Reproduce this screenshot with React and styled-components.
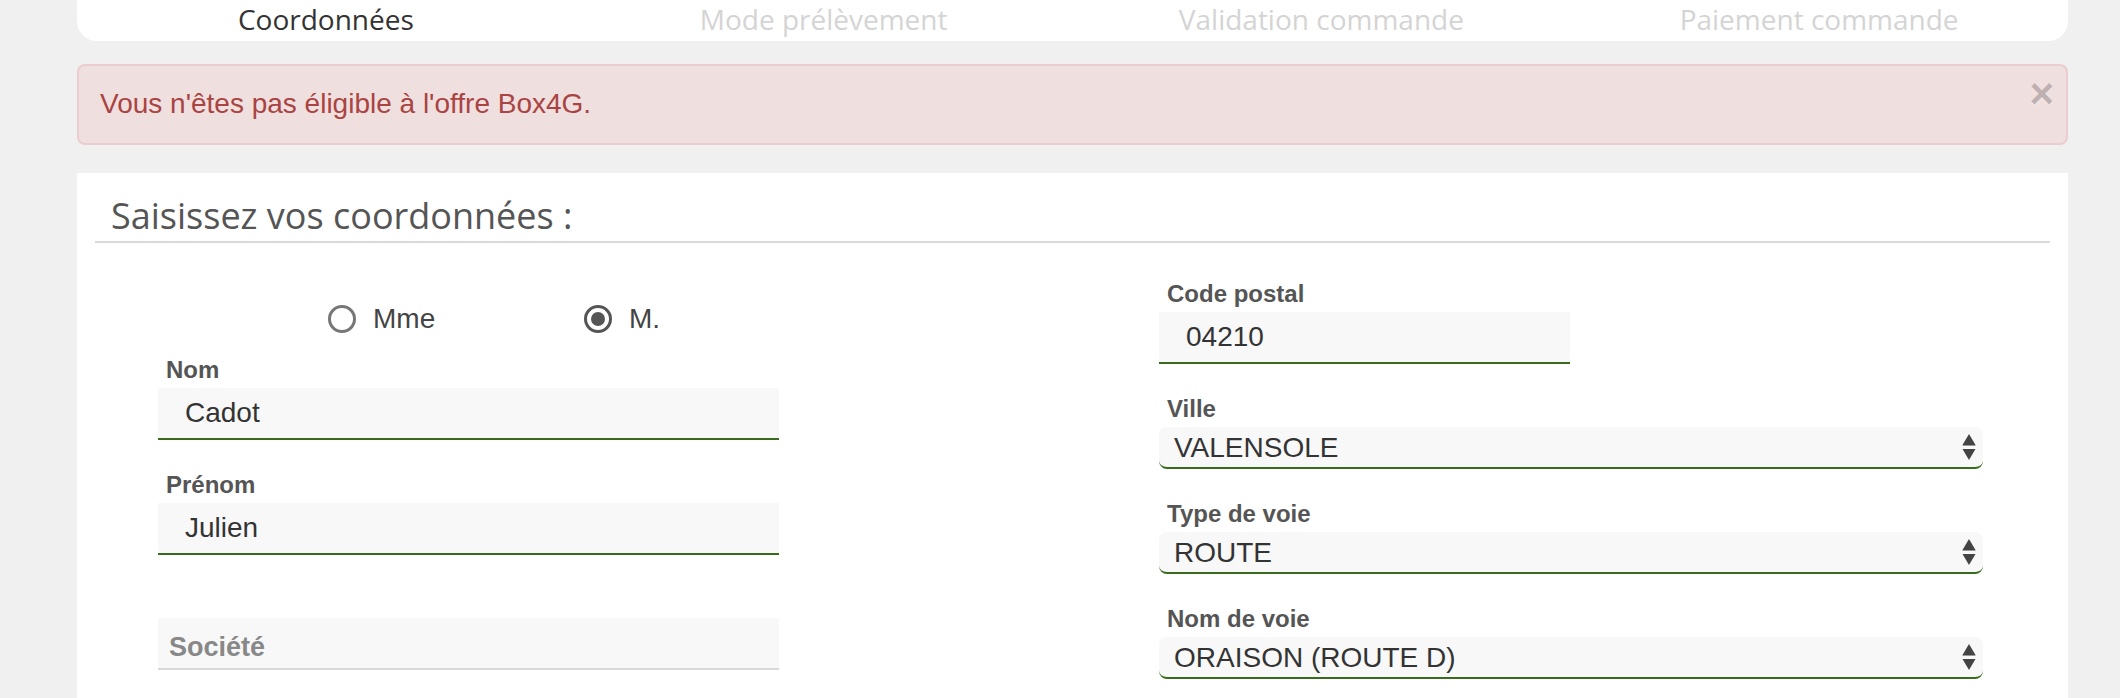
import React from "react";
import styled, { createGlobalStyle } from "styled-components";

const GREEN = "#386c1c";

const GlobalStyle = createGlobalStyle`
  html, body {
    margin: 0;
    padding: 0;
    background: #f0f0f0;
    overflow: hidden;
  }
  body {
    font-family: "Liberation Sans", Arial, sans-serif;
  }
  * { box-sizing: border-box; }
`;

const Page = styled.div`
  width: 1991px;
  margin-left: 77px;
`;

const TabBar = styled.nav`
  display: grid;
  grid-template-columns: repeat(4, 1fr);
  height: 41px;
  padding-top: 1px;
  background: #fff;
  border-radius: 0 0 20px 20px;
`;

const Tab = styled.div`
  font-family: "Open Sans", sans-serif;
  font-size: 28px;
  line-height: 36px;
  text-align: center;
  color: ${(p) => (p.$active ? "#333" : "#d4d4d4")};
`;

const Alert = styled.div`
  display: flex;
  align-items: flex-start;
  margin-top: 23px;
  padding: 18px 12px 19px 21px;
  background: #f0dfdf;
  border: 2px solid #ebccd1;
  border-radius: 8px;
  color: #a94442;
  font-size: 28px;
  line-height: 40px;
`;

const AlertText = styled.div`
  flex: 1;
`;

const CloseButton = styled.button`
  margin-top: -11px;
  padding: 0;
  border: 0;
  background: transparent;
  font-family: "Liberation Sans", Arial, sans-serif;
  font-size: 42px;
  font-weight: 700;
  line-height: 42px;
  color: #000;
  opacity: 0.2;
  text-shadow: 0 2px 0 #fff;
  cursor: pointer;
`;

const Card = styled.section`
  margin-top: 28px;
  height: 525px;
  padding: 21px 18px 0;
  background: #fff;
`;

const Heading = styled.h2`
  margin: 0;
  padding: 0 0 3px 16px;
  border-bottom: 2px solid #d9d9d9;
  font-family: "Open Sans", sans-serif;
  font-size: 36px;
  font-weight: 400;
  line-height: 44px;
  color: #555;
`;

const FormGrid = styled.div`
  display: grid;
  grid-template-columns: 1064px 1fr;
`;

const Column = styled.div`
  display: flex;
  flex-direction: column;
  align-items: flex-start;
  padding-left: ${(p) => p.$padLeft || 0}px;
  padding-top: ${(p) => p.$padTop || 0}px;
`;

const RadioRow = styled.div`
  display: flex;
  align-items: center;
  height: 40px;
  margin-top: 56px;
  margin-bottom: 16px;
  padding-left: 170px;
`;

const RadioOption = styled.label`
  display: flex;
  align-items: center;
  gap: 17px;
  width: ${(p) => p.$width || "auto"};
  font-size: 28px;
  color: #444;
`;

const Radio = styled.input.attrs({ type: "radio" })`
  appearance: none;
  margin: 0;
  width: 28px;
  height: 28px;
  border-radius: 50%;
  border: 3px solid #777;
  background: #fff;
  display: grid;
  place-items: center;
  &:checked {
    border-color: #555;
  }
  &:checked::after {
    content: "";
    width: 14px;
    height: 14px;
    border-radius: 50%;
    background: #555;
  }
`;

const Field = styled.div`
  display: flex;
  flex-direction: column;
  margin-bottom: 30px;
`;

const Label = styled.label`
  display: block;
  min-height: 28px;
  margin-top: 1px;
  margin-bottom: 4px;
  padding-left: 8px;
  font-size: 24px;
  font-weight: 700;
  line-height: 28px;
  color: #555;
`;

const TextInput = styled.input`
  width: ${(p) => p.$width}px;
  height: 52px;
  padding: ${(p) => (p.$placeholderStyle ? "8px 11px 0" : "0 27px")};
  border: 0;
  border-bottom: 2px solid ${(p) => (p.$muted ? "#d9d9d9" : GREEN)};
  background: #f8f8f8;
  font-family: "Liberation Sans", Arial, sans-serif;
  font-size: 28px;
  color: #333;
  outline: none;
  &::placeholder {
    color: #888;
    font-weight: 700;
    font-size: 27px;
    opacity: 1;
  }
`;

const SelectWrap = styled.div`
  position: relative;
  width: 824px;
`;

const Select = styled.select`
  appearance: none;
  width: 100%;
  height: 42px;
  padding: 0 40px 0 15px;
  border: 0;
  border-bottom: 2px solid ${GREEN};
  border-radius: 8px;
  background: #f8f8f8;
  font-family: "Liberation Sans", Arial, sans-serif;
  font-size: 28px;
  color: #333;
  outline: none;
`;

const SelectArrows = styled.svg`
  position: absolute;
  right: 7px;
  top: 7px;
  pointer-events: none;
`;

function Arrows() {
  return (
    <SelectArrows width="14" height="27" viewBox="0 0 14 27">
      <path d="M7 0 L13.5 11 L0.5 11 Z" fill="#444" />
      <rect x="0.5" y="11" width="13" height="1" fill="#999" />
      <path d="M0.5 15 L13.5 15 L7 26 Z" fill="#444" />
    </SelectArrows>
  );
}

function SelectField({ label, value }) {
  return (
    <Field>
      <Label>{label}</Label>
      <SelectWrap>
        <Select defaultValue={value}>
          <option value={value}>{value}</option>
        </Select>
        <Arrows />
      </SelectWrap>
    </Field>
  );
}

function InputField({ label, value, width, placeholder, muted }) {
  return (
    <Field>
      <Label>{label}</Label>
      <TextInput
        $width={width}
        $muted={muted}
        $placeholderStyle={!!placeholder}
        defaultValue={value}
        placeholder={placeholder}
      />
    </Field>
  );
}

export default function App() {
  return (
    <>
      <GlobalStyle />
      <Page>
        <TabBar>
          <Tab $active>Coordonnées</Tab>
          <Tab>Mode prélèvement</Tab>
          <Tab>Validation commande</Tab>
          <Tab>Paiement commande</Tab>
        </TabBar>

        <Alert>
          <AlertText>Vous n'êtes pas éligible à l'offre Box4G.</AlertText>
          <CloseButton aria-label="Fermer">×</CloseButton>
        </Alert>

        <Card>
          <Heading>Saisissez vos coordonnées :</Heading>
          <FormGrid>
            <Column $padLeft={63}>
              <RadioRow>
                <RadioOption $width="256px">
                  <Radio name="civ" value="mme" />
                  Mme
                </RadioOption>
                <RadioOption>
                  <Radio name="civ" value="m" defaultChecked />
                  M.
                </RadioOption>
              </RadioRow>
              <InputField label="Nom" value="Cadot" width={621} />
              <InputField label="Prénom" value="Julien" width={621} />
              <InputField label="" placeholder="Société" width={621} muted />
            </Column>
            <Column $padTop={36}>
              <InputField label="Code postal" value="04210" width={411} />
              <SelectField label="Ville" value="VALENSOLE" />
              <SelectField label="Type de voie" value="ROUTE" />
              <SelectField label="Nom de voie" value="ORAISON (ROUTE D)" />
            </Column>
          </FormGrid>
        </Card>
      </Page>
    </>
  );
}
